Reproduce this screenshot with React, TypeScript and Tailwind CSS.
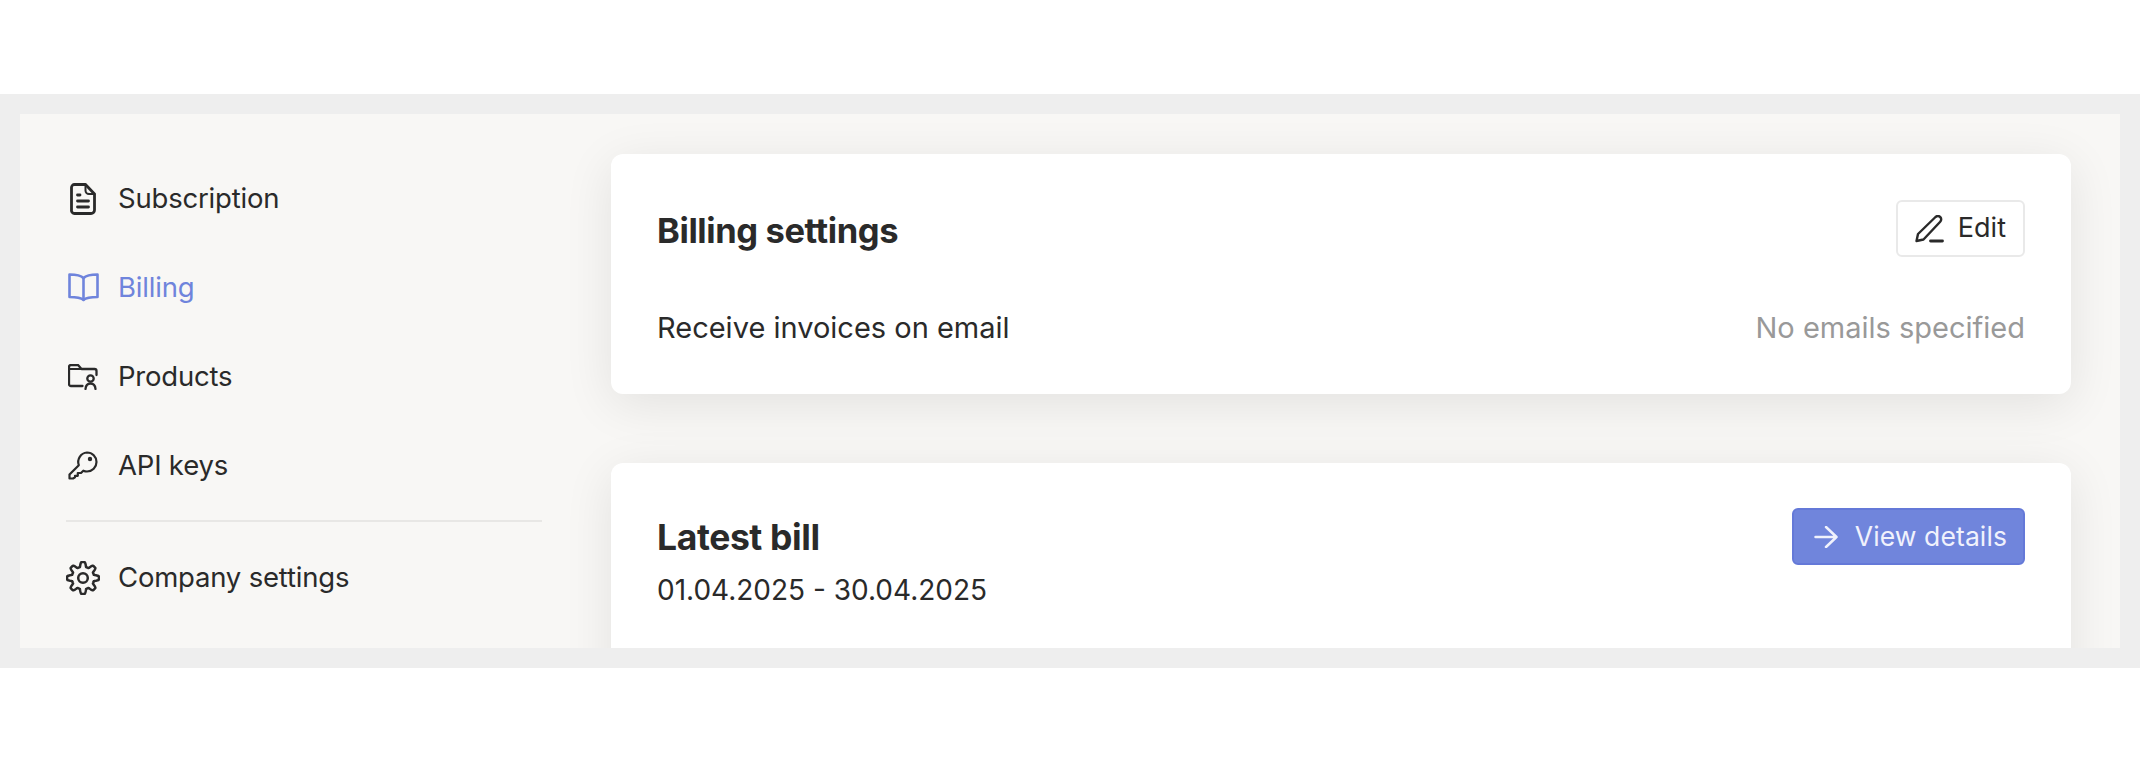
import React from "react";

function DocIcon() {
  return (
    <svg width="26" height="32" viewBox="0 0 26 32" fill="none" stroke="currentColor" strokeWidth="2.8" strokeLinecap="round" strokeLinejoin="round">
      <path d="M4.500 1.500h11l9 9.500v16a3.500 3.500 0 0 1-3.500 3.500H4.500A3 3 0 0 1 1.500 27V4.500a3 3 0 0 1 3-3z" />
      <path d="M15.500 1.500v6a3.500 3.500 0 0 0 3.500 3.500h5.500" strokeWidth="2" />
      <path d="M7.500 12h2.500M7.500 18h11M7.500 24h11" />
    </svg>
  );
}
function BookIcon() {
  return (
    <svg width="31" height="29" viewBox="0 0 31 29" fill="none" stroke="currentColor" strokeWidth="2.6" strokeLinecap="round" strokeLinejoin="round">
      <path d="M15.500 5C13 2.500 8 1.500 1.500 1.500v22.500c6.500 0 11 .3 14 2.800 3-2.500 7.500-2.800 14-2.800V1.500C23 1.500 18 2.500 15.500 5z" />
      <path d="M15.500 5v22" />
    </svg>
  );
}
function FolderIcon() {
  return (
    <svg width="30" height="26" viewBox="0 0 30 26" fill="none" stroke="currentColor" strokeWidth="2.3" strokeLinecap="round" strokeLinejoin="round">
      <path d="M14.500 22H3a2 2 0 0 1-2-2V3a2 2 0 0 1 2-2h7l3.500 4H26.500a2 2 0 0 1 2 2v4" />
      <path d="M1 8.500V5h12.500" strokeWidth="1.800" />
      <circle cx="22.500" cy="14.500" r="3.200" />
      <path d="M17.500 25c.3-3.500 2.300-5.500 5-5.500s4.700 2 5 5.500" />
    </svg>
  );
}
function KeyIcon() {
  return (
    <svg width="30" height="29" viewBox="0 0 30 29" fill="none" stroke="currentColor" strokeWidth="2.200" strokeLinecap="round" strokeLinejoin="round">
      <path d="M19 1.500a9.500 9.500 0 0 1 0 19c-1.300 0-2.500-.3-3.700-.8l-2.300 2.300H9.800v2.800H7v1.500L5 27.500H1.500v-4l9.300-9.300A9.500 9.500 0 0 1 19 1.500z" />
      <circle cx="22" cy="8" r="1.100" fill="currentColor" />
    </svg>
  );
}
function GearIcon() {
  const points: string[] = [];
  for (let i = 0; i < 240; i++) {
    const t = (i / 240) * Math.PI * 2;
    const wave = Math.max(-1, Math.min(1, 1.7 * Math.cos(8 * t)));
    const r = 13.6 + 2.3 * wave;
    points.push(`${(17 + r * Math.sin(t)).toFixed(2)},${(17 - r * Math.cos(t)).toFixed(2)}`);
  }
  return (
    <svg width="34" height="34" viewBox="0 0 34 34" fill="none" stroke="currentColor" strokeWidth="2.500" strokeLinejoin="round">
      <polygon points={points.join(" ")} />
      <circle cx="17" cy="17" r="4.800" />
    </svg>
  );
}
function PenIcon() {
  return (
    <svg width="29" height="28" viewBox="0 0 29 28" fill="none" stroke="currentColor" strokeWidth="2.400" strokeLinecap="round" strokeLinejoin="round">
      <path d="M1.500 26l1.500-7L20.500 2c1.500-1.300 3.300-1.300 4.700 0s1.300 3.300 0 4.700L8.500 24.500z" />
      <path d="M15.500 26h12" strokeWidth="2.800" />
    </svg>
  );
}
function ArrowIcon() {
  return (
    <svg width="24" height="22" viewBox="0 0 24 22" fill="none" stroke="currentColor" strokeWidth="2.500" strokeLinecap="round" strokeLinejoin="round">
      <path d="M1.500 11h21M12 1l10.500 10L12 21" />
    </svg>
  );
}

function NavItem({ icon, label, active }: { icon: React.ReactNode; label: string; active?: boolean }) {
  return (
    <div className={`flex h-[89px] items-center ${active ? "text-[#6f84dc]" : "text-[#2a2a2a]"}`}>
      <div className="mr-[18px] flex w-[34px] items-center justify-center">{icon}</div>
      <span className="text-[27.5px] tracking-[-0.2px]">{label}</span>
    </div>
  );
}

export default function App() {
  return (
    <div className="h-[762px] w-[2140px] overflow-hidden bg-white pt-[94px] font-['Inter',sans-serif]">
      <div className="h-[574px] bg-[#eeeeee] pb-[20px] pl-[20px] pr-[20px] pt-[20px]">
        <div className="flex h-[534px] overflow-hidden bg-[#f8f7f5]">
          <aside className="w-[530px] shrink-0 pl-[46px] pt-[40px]">
            <nav className="w-[476px]">
              <NavItem icon={<DocIcon />} label="Subscription" />
              <NavItem icon={<BookIcon />} label="Billing" active />
              <NavItem icon={<FolderIcon />} label="Products" />
              <NavItem icon={<KeyIcon />} label="API keys" />
              <div className="mb-[11px] mt-[10px] h-[2px] bg-[#e8e7e5]" />
              <NavItem icon={<GearIcon />} label="Company settings" />
            </nav>
          </aside>
          <main className="w-[1570px] shrink-0 pl-[61px] pt-[40px]">
            <section className="flex h-[240px] w-[1460px] flex-col rounded-[12px] bg-white px-[46px] pt-[46px] shadow-[0_10px_50px_rgba(0,0,0,0.09)]">
              <div className="flex h-[57px] items-center justify-between">
                <h2 className="pt-[5px] text-[34.5px] font-bold tracking-[-0.4px] text-[#2a2a2a]">Billing settings</h2>
                <button className="flex h-[57px] w-[129px] items-center justify-end gap-[14px] rounded-[6px] border-2 border-[#e9e9e9] pr-[17px] text-[27px] text-[#2a2a2a]">
                  <PenIcon />
                  Edit
                </button>
              </div>
              <div className="mt-[51px] flex h-[40px] items-center justify-between text-[29px]">
                <span className="text-[#2a2a2a]">Receive invoices on email</span>
                <span className="text-[#999999]">No emails specified</span>
              </div>
            </section>
            <section className="mt-[69px] h-[300px] w-[1460px] rounded-[12px] bg-white px-[46px] pt-[45px] shadow-[0_10px_50px_rgba(0,0,0,0.09)]">
              <div className="flex items-start justify-between">
                <div>
                  <h2 className="text-[35.5px] font-bold leading-[60px] tracking-[-0.4px] text-[#2a2a2a]">Latest bill</h2>
                  <p className="text-[28px] leading-[44px] text-[#2a2a2a]">01.04.2025 - 30.04.2025</p>
                </div>
                <button className="flex h-[57px] w-[233px] items-center justify-end gap-[17px] rounded-[6px] border-2 border-[#6479d8] bg-[#7085dc] pr-[16px] text-[26.5px] tracking-[0.1px] text-[#f0f2fc]">
                  <ArrowIcon />
                  View details
                </button>
              </div>
            </section>
          </main>
        </div>
      </div>
    </div>
  );
}
